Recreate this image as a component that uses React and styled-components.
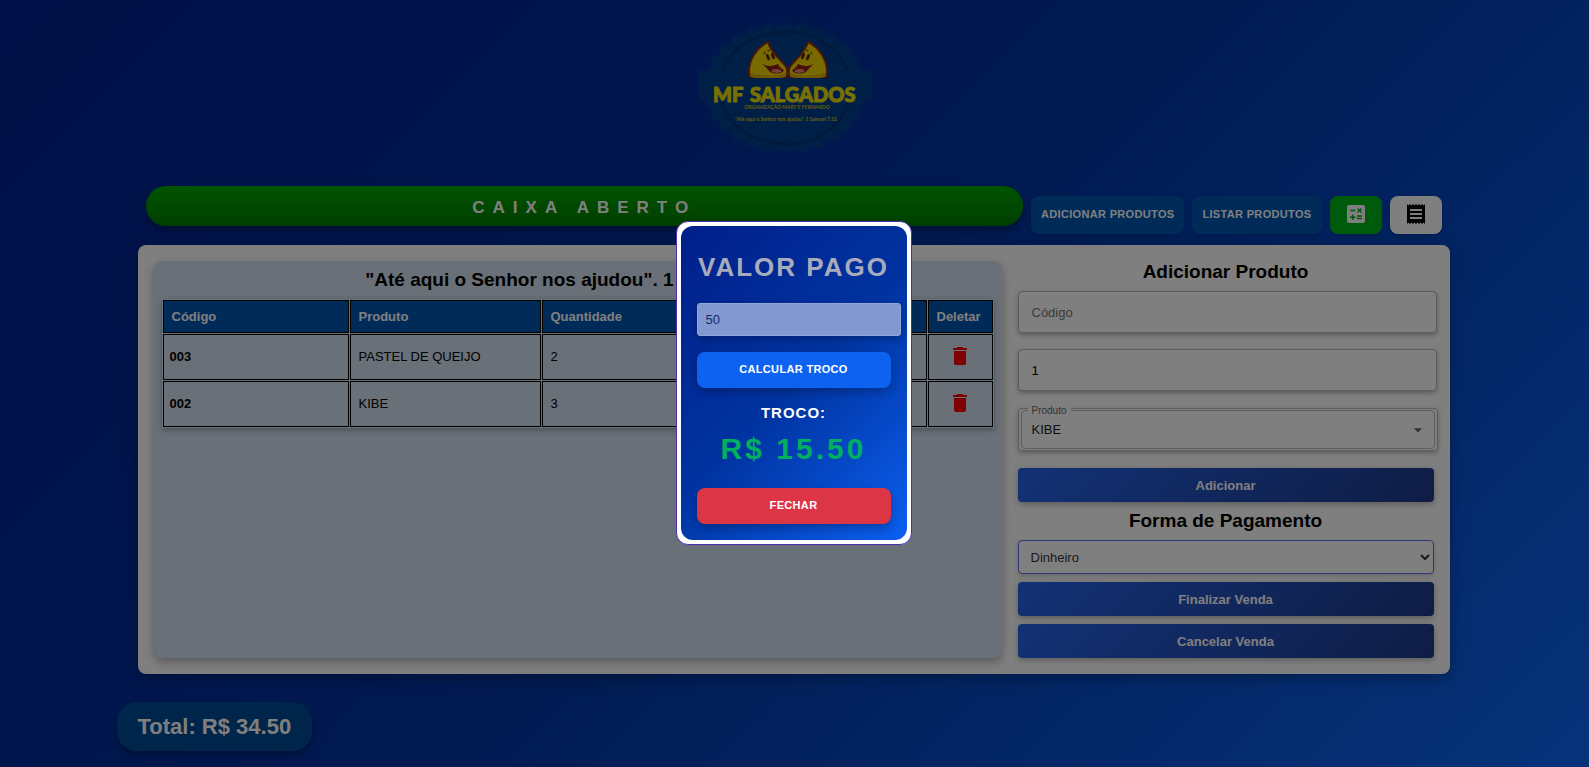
import React, { useState } from "react";
import styled, { createGlobalStyle } from "styled-components";
import { MdCalculate, MdReceipt, MdArrowDropDown } from "react-icons/md";

const GlobalStyle = createGlobalStyle`
  *, *::before, *::after { box-sizing: border-box; }
  body {
    margin: 0;
    font-family: "Liberation Sans", Arial, sans-serif;
    font-size: 13px;
    color: #000;
  }
  button, input, select { font-family: inherit; font-size: 13px; }
`;

const Page = styled.div`
  min-height: 100vh;
  padding: 16px 18px 16px 16px;
  background: linear-gradient(135deg, #002090 0%, #0034a2 50%, #0d66f6 100%);
`;

const Content = styled.main`
  max-width: 1312px;
  margin: 0 auto;
`;

const LogoArea = styled.header`
  display: flex;
  justify-content: center;
  height: 170px;
  padding-right: 18px;
`;

const LogoSvg = styled.svg`
  width: 180px;
  height: 144px;
`;

const Toolbar = styled.div`
  display: flex;
  align-items: flex-start;
  gap: 8px;
  height: 59px;
  padding: 0 8px;
`;

const StatusBar = styled.div`
  flex: 1;
  height: 40px;
  padding-top: 2px;
  border-radius: 20px;
  background: linear-gradient(#00a800, #007c00);
  box-shadow: 0 4px 8px rgba(0, 0, 0, 0.4);
  color: #fff;
  font-size: 17px;
  font-weight: bold;
  letter-spacing: 8px;
  line-height: 40px;
  text-align: center;
`;

const ToolButton = styled.button`
  display: flex;
  align-items: center;
  justify-content: center;
  height: 38px;
  margin-top: 10px;
  padding: 0 ${(p) => (p.$icon ? "14px" : "10px")} 2px;
  border: 0;
  border-radius: 8px;
  background: ${(p) => p.$bg || "#0056b3"};
  box-shadow: 0 2px 6px rgba(0, 0, 0, 0.2);
  color: ${(p) => p.$color || "#fff"};
  font-size: 11px;
  font-weight: bold;
  letter-spacing: 0.03em;
  text-transform: uppercase;
`;

const Card = styled.section`
  display: grid;
  grid-template-columns: 106fr 52fr;
  gap: 16px;
  padding: 16px;
  border-radius: 8px;
  background: #fff;
  box-shadow: 0 4px 16px rgba(0, 0, 0, 0.3);
`;

const SalePanel = styled.section`
  min-width: 0;
  padding: 8px;
  border-radius: 8px;
  background: #d3e0f0;
  box-shadow: 0 4px 10px rgba(0, 0, 0, 0.3);
`;

const Heading = styled.h2`
  margin: ${(p) => p.$margin || "0 0 8px"};
  font-size: 19px;
  font-weight: bold;
  line-height: 22px;
  text-align: center;
`;

const Table = styled.table`
  width: 100%;
  table-layout: fixed;
  border-spacing: 1px;
  box-shadow: 0 2px 6px rgba(0, 0, 0, 0.3);
  text-align: left;

  th, td { border: 1px solid #000; }
  thead th {
    height: 33px;
    padding: 0 8px;
    background: #0056b3;
    color: #fff;
  }
  tbody th { height: 46px; padding: 0 6px 2px; }
  tbody td { padding: 0 8px 2px; }
`;

const Column = styled.col`
  width: ${(p) => p.$width};
`;

const IconButton = styled.button`
  display: flex;
  justify-content: center;
  width: 100%;
  padding: 0;
  border: 0;
  background: none;
  color: #f00;
`;

const Side = styled.form`
  display: flex;
  flex-direction: column;
  min-width: 0;
`;

const Field = styled.input`
  width: calc(100% + 3px);
  height: 42px;
  margin-bottom: 16px;
  padding: 0 13px;
  border: 1px solid #bbb;
  border-radius: 4px;
  background: #fff;
  box-shadow: 0 2px 5px rgba(0, 0, 0, 0.3);
  color: #000;
  &::placeholder { color: #757575; }
`;

const ComboFrame = styled.div`
  width: calc(100% + 4px);
  margin: 1px 0 17px;
  padding: 1px 2px;
  border: 1px solid #bbb;
  border-radius: 4px;
  box-shadow: 0 2px 5px rgba(0, 0, 0, 0.3);
`;

const ComboOutline = styled.div`
  position: relative;
  display: flex;
  align-items: center;
  height: 39px;
  padding: 0 6px 0 10px;
  border: 1px solid #bbb;
  border-radius: 4px;
  color: #666;
`;

const ComboLabel = styled.label`
  position: absolute;
  top: -6px;
  left: 6px;
  padding: 0 4px;
  background: #fff;
  color: #666;
  font-size: 10px;
  line-height: 12px;
`;

const ComboInput = styled.input`
  flex: 1;
  min-width: 0;
  padding: 0;
  border: 0;
  outline: 0;
  background: none;
  color: #222;
`;

const PaymentSelect = styled.select`
  height: 34px;
  padding: 0 8px;
  border: 1px solid #5a6ff0;
  border-radius: 4px;
  background: #fff;
  box-shadow: 0 2px 5px rgba(0, 0, 0, 0.2);
  color: #333;
`;

const ActionButton = styled.button`
  height: 34px;
  margin-top: ${(p) => (p.$spaced ? "8px" : "0")};
  border: 0;
  border-radius: 4px;
  background: linear-gradient(135deg, #2563eb, #1e3a8a);
  box-shadow: 0 2px 6px rgba(0, 0, 0, 0.3);
  color: #fff;
  font-weight: bold;
`;

const Total = styled.output`
  display: inline-block;
  margin: 28px 0 0 -21px;
  padding: 0 21px;
  border-radius: 20px;
  background: #004a94;
  box-shadow: 0 4px 10px rgba(0, 0, 0, 0.3);
  color: #fff;
  font-size: 22px;
  font-weight: bold;
  line-height: 49px;
`;

const Overlay = styled.div`
  position: fixed;
  inset: 0;
  display: flex;
  align-items: center;
  justify-content: center;
  padding: 0 2px 2px 0;
  background: rgba(0, 0, 0, 0.5);
`;

const Dialog = styled.div`
  padding: 4px;
  border: 1px solid #4a2fb5;
  border-radius: 12px;
  background: #fff;
`;

const DialogBody = styled.div`
  display: flex;
  flex-direction: column;
  padding: 25px 16px 16px;
  border-radius: 12px;
  background: linear-gradient(135deg, #001f8b 0%, #0033a0 50%, #0b5ff0 100%);
  color: #fff;
  text-align: center;
`;

const DialogTitle = styled.h2`
  margin: 0 0 20px;
  color: #a8abba;
  font-size: 26px;
  letter-spacing: 2px;
  line-height: 32px;
`;

const PaidInput = styled.input`
  width: calc(100% + 10px);
  height: 33px;
  margin-bottom: 16px;
  padding: 0 8px;
  border: 1px solid #93a5dc;
  border-radius: 3px;
  background: #8298d1;
  box-shadow: 0 3px 8px rgba(0, 0, 0, 0.25);
  color: #13296f;
`;

const DialogButton = styled.button`
  height: 36px;
  padding-bottom: 3px;
  border: 0;
  border-radius: 8px;
  background: ${(p) => (p.$danger ? "#dc3545" : "#0d63f0")};
  box-shadow: 0 4px 8px rgba(0, 0, 0, 0.25);
  color: #fff;
  font-size: 11px;
  font-weight: bold;
  letter-spacing: 0.03em;
  text-transform: uppercase;
`;

const ChangeLabel = styled.div`
  margin-top: 15px;
  font-size: 15px;
  font-weight: bold;
  letter-spacing: 1px;
  line-height: 20px;
`;

const ChangeValue = styled.output`
  margin: 8px 0 21px;
  color: #00b060;
  font-size: 30px;
  font-weight: bold;
  letter-spacing: 3px;
  line-height: 36px;
`;

const TrashIcon = () => (
  <svg width="24" height="24" viewBox="0 0 24 24" fill="currentColor" aria-hidden="true">
    <path d="M6 19c0 1.1.9 2 2 2h8c1.1 0 2-.9 2-2V7H6v12zM19 4h-3.5l-1-1h-5l-1 1H5v2h14V4z" />
  </svg>
);

const scallops = Array.from({ length: 28 }, (_, i) => {
  const a = (i / 28) * Math.PI * 2;
  return [90 + Math.cos(a) * 74, 72 + Math.sin(a) * 58];
});

const Mascot = () => (
  <g strokeLinejoin="round" strokeLinecap="round">
    <path
      d="M73 26 C62 31 54 44 54 55 C54 58 54 60 55 62 H91 C93 58 93 52 89 48 C84 43 76 36 73 26Z"
      fill="#f0d200"
      stroke="#8f2c16"
      strokeWidth="2"
    />
    <path d="M56 61 C66 64 82 63 90 61 C91 60 91 58 91 57 C82 61 68 60 56 57Z" fill="#dfb000" />
    <path d="M67 48 C73 51 79 50 83 48 C84 51 87 53 89 54 C87 58 82 58 78 57 C73 56 73 52 67 48Z" fill="#8f1f1c" />
    <path d="M76 55 C79 52 85 53 87 55 C84 58 79 57 76 55Z" fill="#ee8174" />
    <ellipse cx="73" cy="41" rx="1.5" ry="3.5" transform="rotate(-20 73 41)" fill="#51270e" />
    <ellipse cx="78" cy="40" rx="1.5" ry="3.5" transform="rotate(-20 78 40)" fill="#51270e" />
    <path d="M69 38 L70 36 M73 35 L75 34" fill="none" stroke="#51270e" />
  </g>
);

const Logo = () => (
  <LogoSvg viewBox="0 0 180 144" role="img" aria-label="MF Salgados">
    <g fill="#003e8e">
      {scallops.map(([cx, cy]) => (
        <circle key={`${cx}-${cy}`} cx={cx} cy={cy} r="8" />
      ))}
      <ellipse cx="90" cy="72" rx="78" ry="62" />
    </g>
    <ellipse cx="90" cy="72" rx="66" ry="56" fill="none" stroke="#003274" strokeWidth="3" strokeDasharray="4 1" />
    <path d="M4 54 H177 V84 H4 Z" fill="#003e8e" />
    <Mascot />
    <g transform="translate(186 0) scale(-1 1)">
      <Mascot />
    </g>
    <path d="M50 63 H136" stroke="#003e8e" strokeWidth="2" />
    <g fill="#f0e000" fontFamily="Lato, sans-serif" fontWeight="900">
      <g fontSize="20" stroke="#f0e000" strokeWidth="1" strokeLinejoin="round">
        <text x="18" y="86">MF</text>
        <text x="55" y="86">SALGADOS</text>
      </g>
      <g fill="#d0b810" fontWeight="700" fontSize="5" textAnchor="middle">
        <text x="92" y="93">ORGANIZAÇÃO MARY E FERNANDO</text>
        <text x="91" y="105">"Até aqui o Senhor nos ajudou". 1 Samuel 7:12</text>
      </g>
    </g>
  </LogoSvg>
);

const initialItems = [
  { code: "003", name: "PASTEL DE QUEIJO", quantity: 2, price: "7.50" },
  { code: "002", name: "KIBE", quantity: 3, price: "6.50" },
];

export default function App() {
  const [items, setItems] = useState(initialItems);
  const [open, setOpen] = useState(true);
  const [paid, setPaid] = useState("50");
  const [change, setChange] = useState(15.5);

  return (
    <>
      <GlobalStyle />
      <Page>
        <Content>
          <LogoArea>
            <Logo />
          </LogoArea>
          <Toolbar>
            <StatusBar>CAIXA ABERTO</StatusBar>
            <ToolButton type="button">Adicionar Produtos</ToolButton>
            <ToolButton type="button">Listar Produtos</ToolButton>
            <ToolButton type="button" $icon $bg="#00b418" aria-label="Calcular troco" onClick={() => setOpen(true)}>
              <MdCalculate size={24} />
            </ToolButton>
            <ToolButton type="button" $icon $bg="#fff" $color="#000" aria-label="Recibo">
              <MdReceipt size={24} />
            </ToolButton>
          </Toolbar>
          <Card>
            <SalePanel>
              <Heading>"Até aqui o Senhor nos ajudou". 1 Samuel 7:12</Heading>
              <Table>
                <colgroup>
                  <Column $width="186px" />
                  <Column $width="191px" />
                  <Column />
                  <Column />
                  <Column $width="65px" />
                </colgroup>
                <thead>
                  <tr>
                    <th scope="col">Código</th>
                    <th scope="col">Produto</th>
                    <th scope="col">Quantidade</th>
                    <th scope="col">Valor</th>
                    <th scope="col">Deletar</th>
                  </tr>
                </thead>
                <tbody>
                  {items.map((item) => (
                    <tr key={item.code}>
                      <th scope="row">{item.code}</th>
                      <td>{item.name}</td>
                      <td>{item.quantity}</td>
                      <td>{item.price}</td>
                      <td>
                        <IconButton
                          type="button"
                          aria-label={`Deletar ${item.name}`}
                          onClick={() => setItems(items.filter((i) => i !== item))}
                        >
                          <TrashIcon />
                        </IconButton>
                      </td>
                    </tr>
                  ))}
                </tbody>
              </Table>
            </SalePanel>
            <Side onSubmit={(e) => e.preventDefault()}>
              <Heading>Adicionar Produto</Heading>
              <Field aria-label="Código" placeholder="Código" />
              <Field aria-label="Quantidade" defaultValue="1" />
              <ComboFrame>
                <ComboOutline>
                  <ComboLabel htmlFor="produto">Produto</ComboLabel>
                  <ComboInput id="produto" role="combobox" aria-expanded="false" defaultValue="KIBE" />
                  <MdArrowDropDown size={20} />
                </ComboOutline>
              </ComboFrame>
              <ActionButton type="submit">Adicionar</ActionButton>
              <Heading as="label" htmlFor="pagamento" $margin="8px 0">
                Forma de Pagamento
              </Heading>
              <PaymentSelect id="pagamento" defaultValue="Dinheiro">
                <option>Dinheiro</option>
              </PaymentSelect>
              <ActionButton type="button" $spaced>Finalizar Venda</ActionButton>
              <ActionButton type="button" $spaced>Cancelar Venda</ActionButton>
            </Side>
          </Card>
          <Total>Total: R$ 34.50</Total>
        </Content>
      </Page>
      {open && (
        <Overlay>
          <Dialog role="dialog" aria-modal="true" aria-labelledby="valor-pago">
            <DialogBody>
              <DialogTitle id="valor-pago">VALOR PAGO</DialogTitle>
              <PaidInput aria-labelledby="valor-pago" value={paid} onChange={(e) => setPaid(e.target.value)} />
              <DialogButton type="button" onClick={() => setChange(Number(paid) - 34.5)}>
                Calcular Troco
              </DialogButton>
              <ChangeLabel>TROCO:</ChangeLabel>
              <ChangeValue>R$ {change.toFixed(2)}</ChangeValue>
              <DialogButton type="button" $danger onClick={() => setOpen(false)}>
                Fechar
              </DialogButton>
            </DialogBody>
          </Dialog>
        </Overlay>
      )}
    </>
  );
}
